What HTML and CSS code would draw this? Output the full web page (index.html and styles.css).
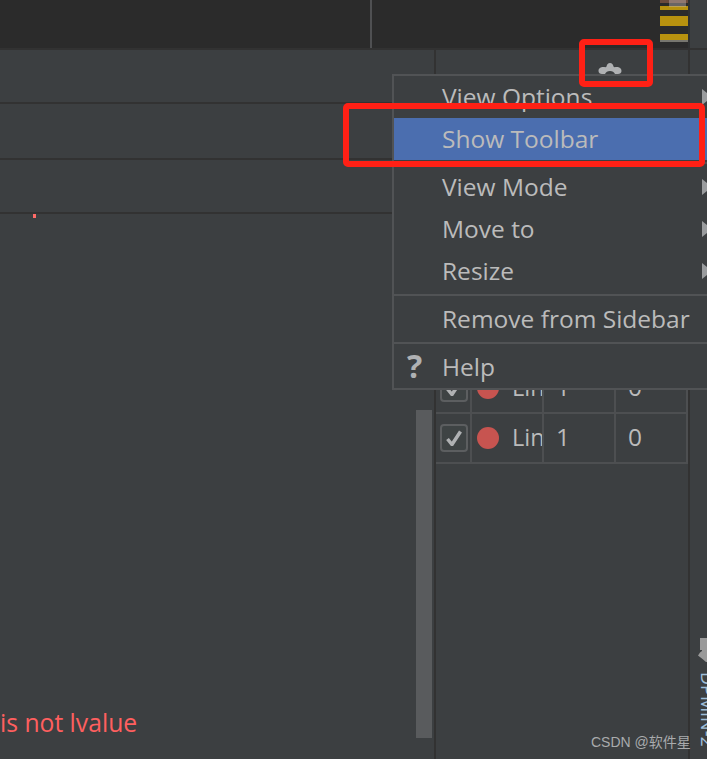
FILE: index.html
```html
<!DOCTYPE html>
<html lang="en">
<head>
<meta charset="utf-8">
<title>Sidebar menu</title>
<link rel="stylesheet" href="styles.css">
</head>
<body>
<div class="window">
  <header class="topbar">
    <div class="top-left"></div>
    <div class="top-mid">
      <div class="stripes">
        <i class="s-brown"></i><i class="s-y1"></i><i class="s-y2"></i><i class="s-y3"></i><i class="s-gray"></i>
        <i class="s-over"></i>
      </div>
    </div>
    <div class="top-side"></div>
  </header>
  <main class="body">
    <section class="editor">
      <div class="ed-row r1"></div>
      <div class="ed-row r2"></div>
      <div class="ed-row r3"></div>
      <div class="ed-rest">
        <i class="red-tick"></i>
        <div class="error">is not lvalue</div>
        <div class="scrollbar"></div>
      </div>
    </section>
    <section class="panel">
      <div class="table">
        <div class="t-row">
          <div class="c c-check"><span class="box"><svg viewBox="0 0 16 16" class="tick"><path d="M1.5 9l4.5 5.5L14.5 1.5" /></svg></span></div>
          <div class="c c-dot"><span class="dot"></span></div>
          <div class="c c-name">Lin</div>
          <div class="c c-num">1</div>
          <div class="c c-num">0</div>
        </div>
        <div class="t-row">
          <div class="c c-check"><span class="box"><svg viewBox="0 0 16 16" class="tick"><path d="M1.5 9l4.5 5.5L14.5 1.5" /></svg></span></div>
          <div class="c c-dot"><span class="dot"></span></div>
          <div class="c c-name">Lin</div>
          <div class="c c-num">1</div>
          <div class="c c-num">0</div>
        </div>
      </div>
    </section>
    <aside class="side">
      <svg class="side-icon" viewBox="0 0 9 24"><path d="M2 0h7v24H8L4.500 21 0 17.500 2 14.500 4 13V12H2z" /></svg>
      <span class="side-label">DPMIN-2</span>
    </aside>
  </main>

  <svg class="wrench" viewBox="0 0 24 11"><path d="M.5 8C.5 5 3 4 5 4c2 0 3 .5 3.500-.5C9 1.500 10 0 12 0s3 1.500 3.500 3.500C16 4.500 17 4 19 4c2 0 4.500 1 4.500 4 0 2-1.500 3-3.500 3h-3c-1-2-2.500-3-5-3s-4 1-5 3H4c-2 0-3.500-1-3.500-3z" /></svg>

  <nav class="menu">
    <div class="item"><span>View Options</span><b class="arrow"></b></div>
    <div class="item active"><span>Show Toolbar</span></div>
    <div class="sep"></div>
    <div class="item"><span>View Mode</span><b class="arrow"></b></div>
    <div class="item"><span>Move to</span><b class="arrow"></b></div>
    <div class="item"><span>Resize</span><b class="arrow"></b></div>
    <div class="sep"></div>
    <div class="item"><span>Remove from Sidebar</span></div>
    <div class="sep"></div>
    <div class="item"><em class="q">?</em><span>Help</span></div>
  </nav>

  <div class="mark mark-icon"></div>
  <div class="mark mark-item"></div>
  <div class="watermark">CSDN @软件星</div>
</div>
</body>
</html>
```
FILE: styles.css
```css
* { box-sizing: border-box; }
html, body { margin: 0; padding: 0; }
body { background: #3c3f41; }
.window {
  position: relative;
  width: 707px;
  height: 759px;
  overflow: hidden;
  background: #3c3f41;
  font-family: "Open Sans", "Noto Sans", sans-serif;
  color: #bbbbbb;
}
.topbar { display: flex; height: 50px; border-bottom: 2px solid #323232; }
.top-left { width: 372px; background: #2b2b2b; border-right: 2px solid #4f5052; }
.top-mid { flex: 1; background: #2b2b2b; display: flex; justify-content: flex-end; }
.top-side { width: 19px; background: #3c3f41; border-left: 2px solid #2f3132; }
.stripes { width: 28px; position: relative; display: flex; flex-direction: column; }
.stripes i { display: block; background: #b8920f; }
.stripes .s-brown { height: 3px; background: #6b4a3c; }
.s-y1 { height: 4px; margin-top: 3px; }
.s-y2 { height: 10px; margin-top: 6px; }
.s-y3 { height: 6px; margin-top: 8px; }
.stripes .s-gray { height: 2px; background: #77766f; }
.stripes .s-over { position: absolute; left: 9px; top: 0; width: 17px; height: 7px; background: rgba(200, 190, 190, 0.4); }

.body { display: flex; height: 709px; }
.editor { width: 436px; display: flex; flex-direction: column; border-right: 2px solid #323232; }
.ed-row { border-bottom: 2px solid #323232; }
.r1 { height: 54px; }
.r2 { height: 56px; }
.r3 { height: 54px; }
.ed-rest { flex: 1; position: relative; }
.red-tick { position: absolute; left: 33px; top: 0; width: 3px; height: 4px; background: #ff6b68; }
.error { position: absolute; left: 0; top: 492px; font-size: 24.7px; line-height: 34px; color: #ff5f5f; white-space: nowrap; }
.scrollbar { position: absolute; left: 416px; top: 196px; width: 16px; height: 328px; background: #595b5d; }

.panel { width: 254px; padding-top: 314px; border-right: 2px solid #323232; }
.t-row { display: flex; height: 50px; border-bottom: 2px solid #4d4f51; }
.c { display: flex; align-items: center; border-right: 2px solid #4d4f51; font-size: 24.5px; height: 100%; }
.c-check { width: 36px; padding-left: 4px; }
.c-dot { width: 36px; padding-left: 5px; border-right: 0; }
.c-name { width: 36px; padding: 0 0 3px 4px; overflow: hidden; font-size: 23.5px; }
.c-num { width: 72px; padding: 0 0 3px 12px; }
.box { display: flex; align-items: center; justify-content: center; width: 28px; height: 28px; border: 2px solid #5c5e60; border-radius: 4px; background: #3e4344; }
.tick { width: 16px; height: 16px; fill: none; stroke: #afb1b3; stroke-width: 3.5; }
.dot { display: block; width: 22px; height: 22px; border-radius: 50%; background: #c75450; }
.side { flex: 1; position: relative; }
.side-icon { position: absolute; left: 8px; top: 588px; width: 9px; height: 24px; fill: #9a9a9a; }
.side-label { position: absolute; left: 6px; top: 622px; writing-mode: vertical-rl; font-size: 18px; color: #9fbdd8; white-space: nowrap; }

.wrench { position: absolute; left: 598px; top: 63px; width: 24px; height: 11px; fill: #afb1b3; }
.menu {
  position: absolute;
  left: 392px;
  top: 74px;
  width: 320px;
  height: 316px;
  background: #3c3f41;
  border: 2px solid #515355;
}
.item { position: relative; display: flex; align-items: center; height: 42px; padding-left: 48px; font-size: 24.5px; line-height: 42px; white-space: nowrap; }
.item.active { background: #4b6eaf; }
.sep { height: 6px; display: flex; align-items: center; }
.sep::before { content: ""; display: block; width: 100%; height: 2px; background: #515355; }
.arrow { position: absolute; left: 308px; top: 13px; width: 0; height: 0; border-left: 10px solid #9a9c9e; border-top: 8px solid transparent; border-bottom: 8px solid transparent; }
.q { position: absolute; left: 13px; top: -1px; font-style: normal; font-weight: 700; font-size: 32px; color: #afb1b3; }

.mark { position: absolute; border: 6px solid #ff2015; border-radius: 5px; }
.mark-icon { left: 579px; top: 39px; width: 74px; height: 48px; }
.mark-item { left: 343px; top: 103px; width: 362px; height: 64px; }
.watermark { position: absolute; left: 591px; top: 733px; font-size: 14px; line-height: 18px; color: #a9abad; font-family: "Liberation Sans", "Noto Sans CJK SC", sans-serif; white-space: nowrap; }
```
